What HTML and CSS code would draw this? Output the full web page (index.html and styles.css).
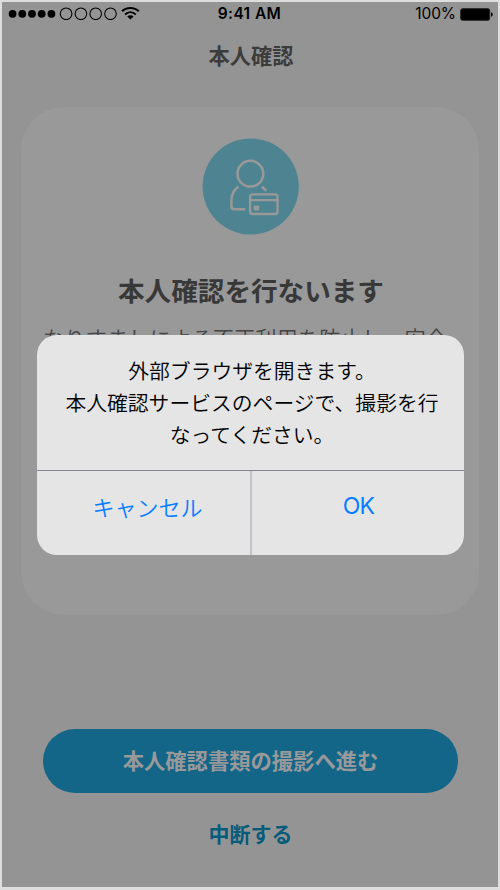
FILE: index.html
```html
<!DOCTYPE html>
<html lang="ja">
<head>
<meta charset="utf-8">
<title>本人確認</title>
<link rel="stylesheet" href="styles.css">
</head>
<body>
<div class="screen">
  <header class="status">
    <svg class="signal" width="135" height="18" viewBox="0 0 135 18" aria-hidden="true">
      <g fill="#000"><circle cx="6.6" cy="11.8" r="3.9"/><circle cx="16.3" cy="11.8" r="3.9"/><circle cx="26" cy="11.8" r="3.9"/><circle cx="35.7" cy="11.8" r="3.9"/><circle cx="45.4" cy="11.8" r="3.9"/></g>
      <g fill="none" stroke="#000" stroke-width="1.1"><circle cx="60.1" cy="11.8" r="5.8"/><circle cx="74.9" cy="11.8" r="5.8"/><circle cx="89.7" cy="11.8" r="5.8"/><circle cx="104.5" cy="11.8" r="5.8"/></g>
      <g fill="none" stroke="#000" stroke-width="2"><path d="M116 9.3C120.5 4.8 128.3 4.8 132.8 9.3"/><path d="M119 12.5C122.3 9.4 126.5 9.4 129.8 12.5"/></g>
      <path d="M121.2 14.5Q124.4 12 127.6 14.5L124.4 17.4Z"/>
    </svg>
    <span class="time">9:41 AM</span>
    <span class="power">100%
      <svg width="33" height="13" viewBox="0 0 33 13" aria-hidden="true"><rect x=".7" y=".7" width="29" height="11.6" rx="1.8" fill="#000" stroke="#222" stroke-width="1"/><path d="M31 4.2q1.8.5 1.8 2.3T31 8.8z"/></svg>
    </span>
  </header>
  <h1 class="title">本人確認</h1>
  <main class="card">
    <svg class="person" width="97" height="97" viewBox="0 0 97 97" aria-hidden="true">
      <circle cx="48.7" cy="48.5" r="48.1" fill="#4e8491"/>
      <g fill="none" stroke="#999" stroke-width="2.5" stroke-linecap="round" stroke-linejoin="round">
        <circle cx="48.4" cy="35.7" r="12.9"/>
        <path d="M36.4 48.8C31.5 52.3 29.4 57.5 29.4 62.5V68.5Q29.4 71.2 32.1 71.2H43.2" stroke-linecap="butt"/>
        <path d="M60 48.6L64.3 52.8" stroke-linecap="butt"/>
        <rect x="48.1" y="56.4" width="27.4" height="19.6" rx="2.5" stroke-width="2.3"/>
        <path d="M48 62.1H75.5" stroke-width="2.3"/>
      </g>
      <rect x="51.7" y="67.5" width="5.4" height="5" rx=".8" fill="#999"/>
    </svg>
    <h2 class="heading">本人確認を行ないます</h2>
    <p class="lead">なりすましによる不正利用を防止し、安全</p>
  </main>
  <button class="proceed">本人確認書類の撮影へ進む</button>
  <button class="quit">中断する</button>
  <section class="dialog" role="dialog">
    <p class="message">外部ブラウザを開きます。<br>本人確認サービスのページで、撮影を行<br>なってください。</p>
    <div class="actions">
      <button class="action">キャンセル</button>
      <button class="action ok">OK</button>
    </div>
  </section>
</div>
</body>
</html>
```
FILE: styles.css
```css
* { box-sizing: border-box; }
body { margin: 0; background: #949494; font-family: "Noto Sans CJK JP", sans-serif; }
button { border: 0; background: none; padding: 0; font-family: inherit; }
.screen {
  position: relative;
  display: flex;
  flex-direction: column;
  align-items: center;
  width: 500px;
  height: 890px;
  background: #949494;
  border: 2px solid #dedede;
  border-bottom-width: 3px;
  overflow: hidden;
}
.status {
  display: grid;
  grid-template-columns: 1fr auto 1fr;
  align-items: center;
  width: 100%;
  height: 24px;
  padding: 0 5px 0 4px;
  font: 15.5px/24px Inter, sans-serif;
  color: #000;
}
.signal { display: block; margin-top: -6px; }
.time { font-weight: 600; letter-spacing: .4px; }
.power { display: flex; align-items: center; justify-content: flex-end; gap: 4px; letter-spacing: -.1px; }
.title { margin: 13px 0 0 2px; font-size: 21.2px; line-height: 32px; font-weight: 700; color: #3c3c3c; }
.card {
  display: flex;
  flex-direction: column;
  align-items: center;
  width: 458px;
  height: 508px;
  margin-top: 36px;
  padding-top: 31px;
  border-radius: 43px;
  background: #999;
}
.heading { margin: 36px 0 0 2px; font-size: 26.6px; line-height: 38px; font-weight: 700; color: #383838; }
.lead { margin: 13px 0 0 -10px; font-size: 21.3px; line-height: 32px; font-weight: 350; color: #444; white-space: nowrap; }
.proceed {
  width: 415px;
  height: 64px;
  margin-top: 114px;
  padding: 0 0 4px 1px;
  border-radius: 32px;
  background: #146689;
  color: #999;
  font-size: 21.3px;
  font-weight: 700;
}
.quit { margin: 24px 0 0 1px; font-size: 21px; line-height: 32px; font-weight: 700; color: #075b7b; }
.dialog {
  position: absolute;
  left: 35px;
  top: 333px;
  width: 427px;
  height: 220px;
  display: flex;
  flex-direction: column;
  border-radius: 20px;
  background: #e5e5e5;
  overflow: hidden;
}
.message {
  flex: 1;
  margin: 0;
  padding: 19px 0 0 3px;
  text-align: center;
  font-size: 20.8px;
  line-height: 32px;
  font-weight: 350;
  color: #000;
  white-space: nowrap;
}
.actions { display: grid; grid-template-columns: 213px 1fr; height: 85px; border-top: 1px solid #858590; }
.action { padding: 0 0 15px 8px; color: #077eff; font-size: 22px; font-weight: 350; }
.action.ok { padding: 0 0 15px 1px; border-left: 2px solid #c2c2c8; font-family: Inter, sans-serif; font-size: 23px; font-weight: 400; letter-spacing: -.8px; }
```
